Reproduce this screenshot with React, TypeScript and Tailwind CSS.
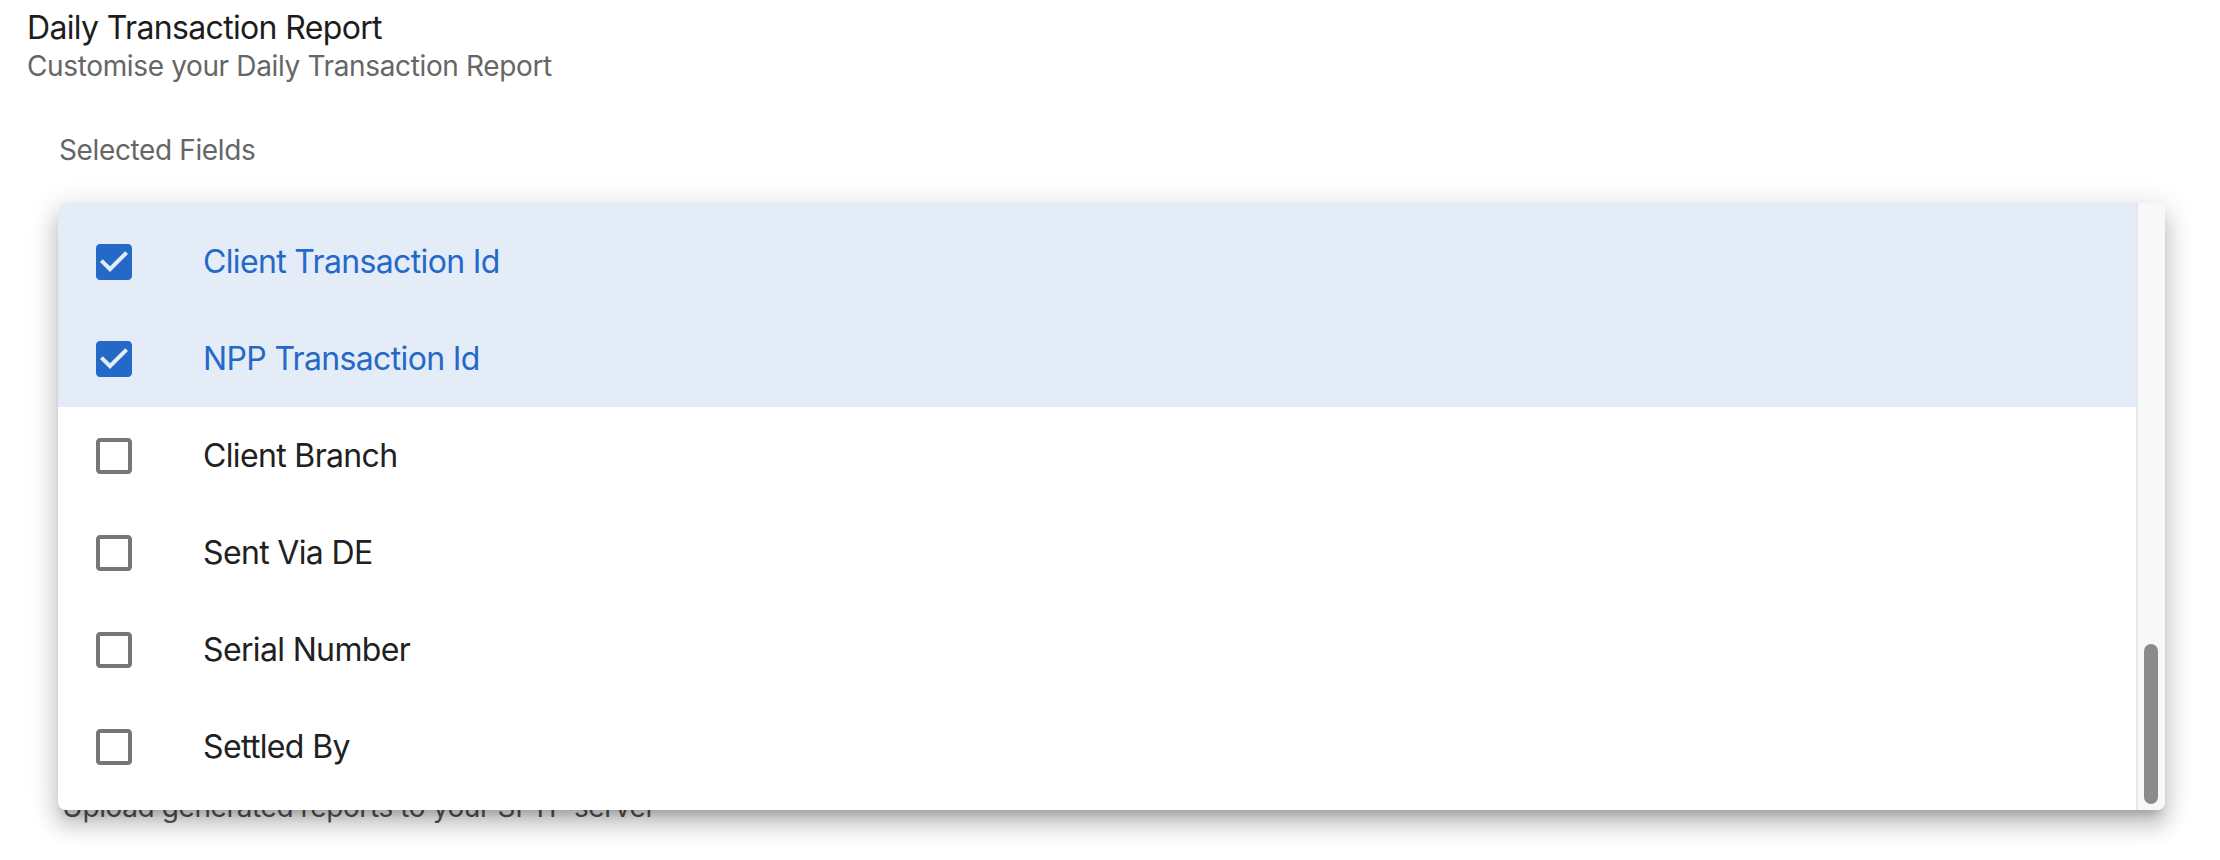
import React from "react";

const FONT = { fontFamily: 'Inter, "Noto Sans", "Liberation Sans", sans-serif' };

function Checked() {
  return (
    <svg width="48" height="48" viewBox="0 0 24 24" className="shrink-0">
      <path
        fill="#2569c8"
        d="M19 3H5c-1.11 0-2 .9-2 2v14c0 1.1.89 2 2 2h14c1.11 0 2-.9 2-2V5c0-1.1-.89-2-2-2zm-9 14l-5-5 1.41-1.41L10 14.17l7.59-7.59L19 8l-9 9z"
      />
    </svg>
  );
}

function Unchecked() {
  return (
    <svg width="48" height="48" viewBox="0 0 24 24" className="shrink-0">
      <path
        fill="#767676"
        d="M19 5v14H5V5h14m0-2H5c-1.1 0-2 .9-2 2v14c0 1.1.9 2 2 2h14c1.1 0 2-.9 2-2V5c0-1.1-.9-2-2-2z"
      />
    </svg>
  );
}

const items = [
  { label: "Client Transaction Id", checked: true },
  { label: "NPP Transaction Id", checked: true },
  { label: "Client Branch", checked: false },
  { label: "Sent Via DE", checked: false },
  { label: "Serial Number", checked: false },
  { label: "Settled By", checked: false },
];

export default function App() {
  return (
    <div className="relative h-[860px] w-[2220px] overflow-hidden bg-white" style={FONT}>
      <div className="pl-[27px] pt-[8px]">
        <div className="text-[32px] leading-[40px] tracking-[-0.65px] text-[#1d1d1d]">Daily Transaction Report</div>
        <div className="mt-0 text-[28px] leading-[36px] tracking-[-0.36px] text-[#666666]">
          Customise your Daily Transaction Report
        </div>
      </div>
      <div className="pl-[59px] mt-[48px] text-[28px] leading-[36px] tracking-[-0.37px] text-[#666666]">
        Selected Fields
      </div>
      <div className="pl-[62px] mt-[621px] text-[28px] leading-[36px] tracking-[-0.4px] text-[#555555]">
        Upload generated reports to your SFTP server
      </div>

      <div className="absolute left-[58px] top-[203px] flex h-[607px] w-[2107px] overflow-hidden rounded-[8px] bg-white shadow-[0_10px_10px_-6px_rgba(0,0,0,0.2),0_16px_20px_2px_rgba(0,0,0,0.14),0_6px_28px_5px_rgba(0,0,0,0.12)]">
        <div className="flex-1">
          <div className="h-[10px] bg-[#e4ecf7]" />
          {items.map((it) => (
            <div
              key={it.label}
              className={`flex h-[97px] items-center pl-[32px] ${it.checked ? "bg-[#e4ecf7]" : "bg-white"}`}
            >
              {it.checked ? <Checked /> : <Unchecked />}
              <span
                className={`ml-[65px] text-[32px] leading-[40px] tracking-[-0.65px] ${it.checked ? "text-[#2569c8]" : "text-[#212121]"}`}
              >
                {it.label}
              </span>
            </div>
          ))}
        </div>
        <div className="relative w-[29px] border-l-2 border-[#e6e6e6] bg-[#f8f8f8]">
          <div className="absolute left-[6px] top-[441px] h-[160px] w-[14px] rounded-full bg-[#8b8b8b]" />
        </div>
      </div>
    </div>
  );
}
